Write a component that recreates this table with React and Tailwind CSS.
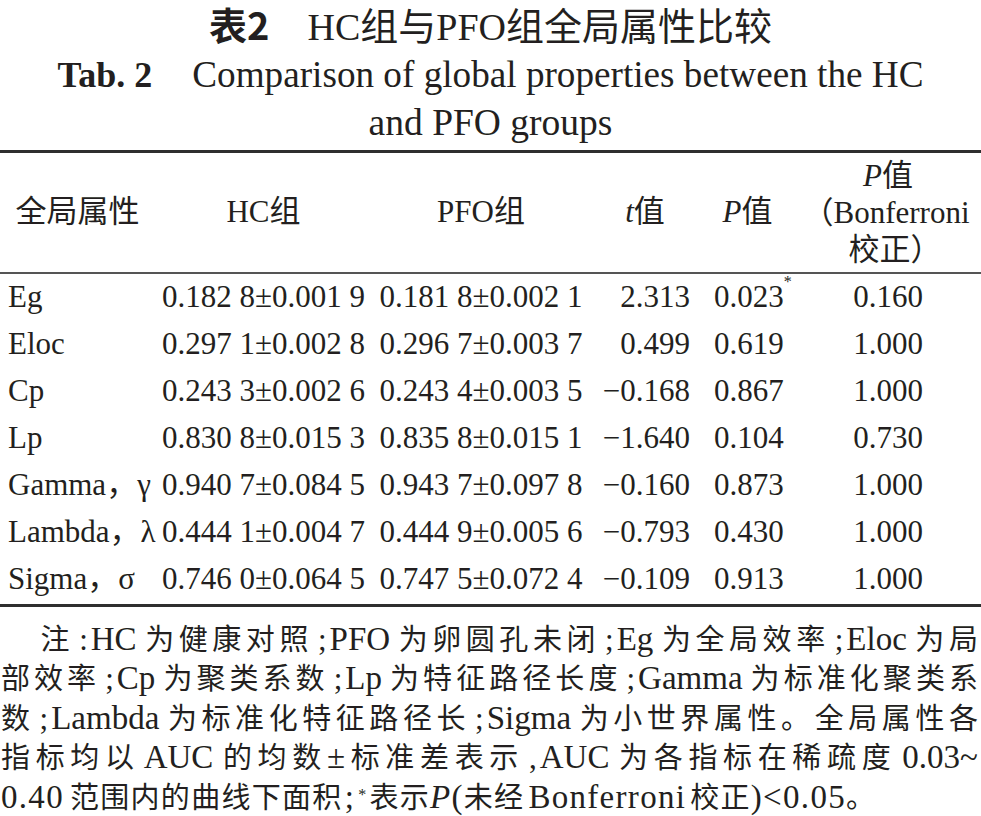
import React from "react";

const F = { fontFamily: '"Liberation Serif", "Noto Sans CJK SC", serif' };

const rows = [
  ["Eg", "0.182 8±0.001 9", "0.181 8±0.002 1", "2.313", "0.023", true, "0.160"],
  ["Eloc", "0.297 1±0.002 8", "0.296 7±0.003 7", "0.499", "0.619", false, "1.000"],
  ["Cp", "0.243 3±0.002 6", "0.243 4±0.003 5", "−0.168", "0.867", false, "1.000"],
  ["Lp", "0.830 8±0.015 3", "0.835 8±0.015 1", "−1.640", "0.104", false, "0.730"],
  ["Gamma，γ", "0.940 7±0.084 5", "0.943 7±0.097 8", "−0.160", "0.873", false, "1.000"],
  ["Lambda，λ", "0.444 1±0.004 7", "0.444 9±0.005 6", "−0.793", "0.430", false, "1.000"],
  ["Sigma，σ", "0.746 0±0.064 5", "0.747 5±0.072 4", "−0.109", "0.913", false, "1.000"],
];

function Line({ children, last }) {
  return (
    <div
      className={
        last
          ? "h-[40px] text-left whitespace-nowrap tracking-[1.3px]"
          : "h-[39.5px] text-justify [text-align-last:justify] whitespace-nowrap"
      }
    >
      {children}
    </div>
  );
}

/* Latin run with auto-space */
function L({ children, l = true, r = true }) {
  return (
    <span className={"text-[33px] leading-none " + (l && r ? "mx-[4px]" : l ? "ml-[4px]" : r ? "mr-[4px]" : "")}>
      {children}
    </span>
  );
}

/* plain Latin run */
function T({ children, className = "" }) {
  return <span className={"text-[33px] leading-none " + className}>{children}</span>;
}

function Pn({ children }) {
  return <span className="text-[31px] leading-none ml-[5px] mr-[3px]">{children}</span>;
}

export default function App() {
  return (
    <div className="w-[981px] h-[816px] bg-white text-[#231f20] overflow-hidden" style={F}>
      <div className="text-center leading-[47px]">
        <div className="text-[38px] whitespace-nowrap">
          <span className="font-bold" style={{ fontFamily: '"Noto Sans CJK SC", "Liberation Sans", sans-serif' }}>
            表2
          </span>
          <span className="ml-[38px]">HC组与PFO组全局属性比较</span>
        </div>
        <div className="text-[37.2px] whitespace-nowrap">
          <span className="font-bold text-[36px]">Tab. 2</span>
          <span className="ml-[40px]">Comparison of global properties between the HC</span>
        </div>
        <div className="text-[37.5px]">and PFO groups</div>
      </div>

      <div className="mt-[4px] border-t-[3px] border-[#2e2e2e]" />

      <table className="w-[981px] table-fixed border-collapse text-[31px]">
        <colgroup>
          <col className="w-[155px]" />
          <col className="w-[217px]" />
          <col className="w-[218px]" />
          <col className="w-[110px]" />
          <col className="w-[95px]" />
          <col className="w-[186px]" />
        </colgroup>
        <thead>
          <tr className="h-[120px] border-b-2 border-[#555]">
            <th className="font-normal text-center align-middle">全局属性</th>
            <th className="font-normal text-center align-middle">HC组</th>
            <th className="font-normal text-center align-middle">PFO组</th>
            <th className="font-normal text-center align-middle">
              <span className="italic">t</span>值
            </th>
            <th className="font-normal text-center align-middle">
              <span className="italic">P</span>值
            </th>
            <th className="font-normal text-center align-middle leading-[37px] whitespace-nowrap">
              <div>
                <span className="italic">P</span>值
              </div>
              <div className="-ml-[4px]">（Bonferroni</div>
              <div className="ml-[14px]">校正）</div>
            </th>
          </tr>
        </thead>
        <tbody>
          {rows.map((r, i) => (
            <tr key={i} className="h-[47px]">
              <td className="pl-[8px] whitespace-nowrap">{r[0]}</td>
              <td className="text-center whitespace-nowrap">{r[1]}</td>
              <td className="text-center whitespace-nowrap">{r[2]}</td>
              <td className="text-right pr-[10px] whitespace-nowrap">{r[3]}</td>
              <td className="pl-[14px] whitespace-nowrap">
                {r[4]}
                {r[5] && <sup className="text-[16px] align-[12px]">*</sup>}
              </td>
              <td className="text-center whitespace-nowrap">{r[6]}</td>
            </tr>
          ))}
        </tbody>
      </table>

      <div className="mt-[1px] border-t-[3px] border-[#2e2e2e]" />

      <div className="pt-[13px] text-[29px] leading-[40px] pl-[1px] pr-[3px]">
        <Line>
          <span className="inline-block w-[35px]" />注<Pn>:</Pn><L l={false}>HC</L>为健康对照<Pn>;</Pn><L l={false}>PFO</L>为卵圆孔未闭<Pn>;</Pn><L l={false}>Eg</L>为全局效率<Pn>;</Pn><L l={false}>Eloc</L>为局
        </Line>
        <Line>
          部效率<Pn>;</Pn><L l={false}>Cp</L>为聚类系数<Pn>;</Pn><L l={false}>Lp</L>为特征路径长度<Pn>;</Pn><L l={false}>Gamma</L>为标准化聚类系
        </Line>
        <Line>
          数<Pn>;</Pn><L l={false}>Lambda</L>为标准化特征路径长<Pn>;</Pn><L l={false}>Sigma</L>为小世界属性。全局属性各
        </Line>
        <Line>
          指标均以<L>AUC</L>的均数<T>±</T>标准差表示<Pn>,</Pn><L l={false}>AUC</L>为各指标在稀疏度<T className="ml-[6px]">0.03~</T>
        </Line>
        <Line last>
          <T className="mr-[6px]">0.40</T>范围内的曲线下面积<T className="ml-[2px]">;</T>
          <sup className="text-[16px] leading-none ml-[3px] mr-[2px]">*</sup>表示<T className="italic">P</T>
          <T>(</T>未经<L>Bonferroni</L>校正<T>)&lt;0.05</T>。
        </Line>
      </div>
    </div>
  );
}
